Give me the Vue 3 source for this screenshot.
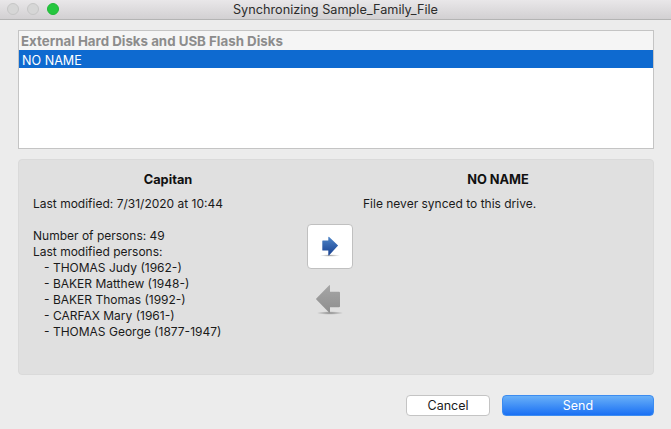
<script setup>
const persons = ['THOMAS Judy (1962-)', 'BAKER Matthew (1948-)', 'BAKER Thomas (1992-)', 'CARFAX Mary (1961-)', 'THOMAS George (1877-1947)']
</script>

<template>
  <div class="window">
    <header class="titlebar">
      <div class="lights">
        <span class="light"></span>
        <span class="light"></span>
        <span class="light green"></span>
      </div>
      <span class="title">Synchronizing Sample_Family_File</span>
    </header>
    <main class="content">
      <section class="list">
        <div class="group">External Hard Disks and USB Flash Disks</div>
        <div class="row">NO NAME</div>
      </section>
      <section class="panel">
        <div class="col left">
          <h3>Capitan</h3>
          <p class="mod">Last modified: 7/31/2020 at 10:44</p>
          <p class="num">Number of persons: 49</p>
          <p>Last modified persons:</p>
          <p v-for="p in persons" :key="p" class="person">- {{ p }}</p>
        </div>
        <div class="arrows">
          <button class="arrow-btn">
            <svg width="24" height="24" viewBox="0 0 24 24">
              <defs>
                <linearGradient id="blue" x1="0" y1="0" x2="0" y2="1">
                  <stop offset="0" stop-color="#4f86c8" />
                  <stop offset="1" stop-color="#163f90" />
                </linearGradient>
                <radialGradient id="shade">
                  <stop offset="0" stop-color="#000" stop-opacity=".35" />
                  <stop offset="1" stop-color="#000" stop-opacity="0" />
                </radialGradient>
              </defs>
              <ellipse cx="12" cy="20.5" rx="10" ry="1.3" fill="url(#shade)" />
              <path d="M4.800 5.500h5.500V2l.6-.3 9.200 8.800-9.200 10-.6-.3v-4.700H4.800a.5.5 0 0 1-.5-.5V6a.5.5 0 0 1 .5-.5z" fill="url(#blue)" />
            </svg>
          </button>
          <div class="arrow-off">
            <svg width="30" height="34" viewBox="0 0 30 34">
              <defs>
                <linearGradient id="grey" x1="0" y1="0" x2="0" y2="1">
                  <stop offset="0" stop-color="#a6a6a6" />
                  <stop offset="1" stop-color="#8e8e8e" />
                </linearGradient>
                <radialGradient id="shade2">
                  <stop offset="0" stop-color="#000" stop-opacity=".4" />
                  <stop offset="1" stop-color="#000" stop-opacity="0" />
                </radialGradient>
              </defs>
              <ellipse cx="15" cy="31" rx="13.500" ry="1.800" fill="url(#shade2)" />
              <path d="M14.500 3 1.300 16.500a.7.7 0 0 0 0 1L14.500 31l.5-.4v-5.300h9a1 1 0 0 0 1-1V10.700a1 1 0 0 0-1-1h-9V3.400z" fill="url(#grey)" />
            </svg>
          </div>
        </div>
        <div class="col right">
          <h3>NO NAME</h3>
          <p class="mod">File never synced to this drive.</p>
        </div>
      </section>
      <footer class="actions">
        <button class="btn cancel">Cancel</button>
        <button class="btn send">Send</button>
      </footer>
    </main>
  </div>
</template>

<style scoped>
.window {
  width: 671px;
  height: 429px;
  background: #ececec;
  font-family: Inter, "Liberation Sans", sans-serif;
  font-size: 12px;
  color: #1a1a1a;
  overflow: hidden;
}
.titlebar {
  height: 19px;
  display: flex;
  align-items: center;
  justify-content: center;
  position: relative;
  background: linear-gradient(#e9e7e9, #d2d0d2);
  border-bottom: 1px solid #b4b4b4;
}
.lights {
  position: absolute;
  left: 7px;
  top: 3px;
  display: flex;
  gap: 8px;
}
.light {
  width: 12px;
  height: 12px;
  border-radius: 50%;
  box-sizing: border-box;
  background: #d6d6d6;
  border: 1px solid #c6c6c6;
}
.light.green {
  background: #25c73f;
  border-color: #20b838;
}
.title {
  font-size: 12.700px;
  color: #2c2c2c;
}
.content {
  padding: 10px 17px 0 18px;
}
.list {
  height: 119px;
  box-sizing: border-box;
  background: #fff;
  border: 1px solid #c4c4c4;
}
.group {
  height: 19px;
  line-height: 21px;
  padding-left: 2px;
  font-size: 13.300px;
  font-weight: 700;
  color: #8c8c8c;
  background: #f5f5f5;
}
.row {
  height: 18px;
  line-height: 21px;
  padding-left: 3px;
  font-size: 12.600px;
  background: #0e6ad0;
  color: #fff;
}
.panel {
  margin-top: 10px;
  height: 216px;
  box-sizing: border-box;
  display: flex;
  background: #e0e0e0;
  border: 1px solid #dadada;
  border-radius: 4px;
}
.col {
  padding-top: 12px;
}
.left {
  width: 274px;
  padding-left: 14px;
  box-sizing: border-box;
}
.right {
  flex: 1;
  padding-left: 10px;
}
h3 {
  margin: 0;
  height: 15px;
  line-height: 15px;
  font-size: 12.800px;
  font-weight: 700;
  text-align: center;
  color: #111;
}
.left h3 {
  padding-left: 10px;
}
.right h3 {
  padding-right: 20px;
}
p {
  margin: 0;
  height: 16px;
  line-height: 16px;
}
.mod {
  margin-top: 9px;
}
.num {
  margin-top: 16px;
}
.person {
  padding-left: 11px;
}
.arrows {
  width: 46px;
  margin-left: 14px;
  padding-top: 64px;
  display: flex;
  flex-direction: column;
  align-items: center;
}
.arrow-btn {
  width: 46px;
  height: 45px;
  padding: 0;
  display: flex;
  align-items: center;
  justify-content: center;
  background: #fff;
  border: 1px solid #c0c0c0;
  border-radius: 4px;
}
.arrow-off {
  margin-top: 13px;
  height: 34px;
}
.actions {
  margin-top: 20px;
  display: flex;
  justify-content: flex-end;
  gap: 12px;
}
.btn {
  height: 21px;
  padding: 0;
  font: inherit;
  font-size: 12.500px;
  border-radius: 4px;
}
.cancel {
  width: 84px;
  background: #fff;
  border: 1px solid #c4c4c4;
  color: #1a1a1a;
}
.send {
  width: 152px;
  background: linear-gradient(#69b0f8, #1a70f4);
  border: 1px solid #3c8cf0;
  color: #fff;
}
</style>
